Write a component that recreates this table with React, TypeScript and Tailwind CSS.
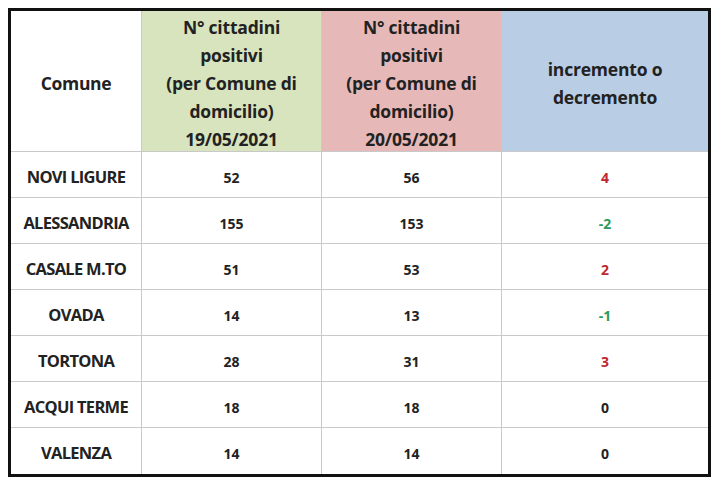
import React from "react";

const rows: [string, string, string, string, "r" | "g" | "k"][] = [
  ["NOVI LIGURE", "52", "56", "4", "r"],
  ["ALESSANDRIA", "155", "153", "-2", "g"],
  ["CASALE M.TO", "51", "53", "2", "r"],
  ["OVADA", "14", "13", "-1", "g"],
  ["TORTONA", "28", "31", "3", "r"],
  ["ACQUI TERME", "18", "18", "0", "k"],
  ["VALENZA", "14", "14", "0", "k"],
];

export default function App() {
  return (
    <div className="w-[720px] h-[485px] bg-white pt-[8px] pl-[8px]" style={{ fontFamily: "'Open Sans', sans-serif" }}>
      <div className="w-[703px] border-[3px] border-[#111] grid grid-cols-[131px_180px_180px_1fr] text-[#222] font-bold">
        <div className="h-[141px] flex items-center justify-center text-[17.5px] tracking-[-0.3px] border-r border-b border-[#c9c9c9] pt-[4px]">Comune</div>
        <div className="h-[141px] flex items-center justify-center text-center text-[17.5px] tracking-[-0.2px] leading-[28px] bg-[#d8e4bd] border-r border-b border-[#c9c9c9] pt-[4px]">
          <div>N° cittadini<br />positivi<br />(per Comune di<br />domicilio)<br />19/05/2021</div>
        </div>
        <div className="h-[141px] flex items-center justify-center text-center text-[17.5px] tracking-[-0.2px] leading-[28px] bg-[#e6b9b8] border-r border-b border-[#c9c9c9] pt-[4px]">
          <div>N° cittadini<br />positivi<br />(per Comune di<br />domicilio)<br />20/05/2021</div>
        </div>
        <div className="h-[141px] flex items-center justify-center text-center text-[17.5px] tracking-[-0.2px] leading-[28px] bg-[#b9cde5] border-b border-[#c9c9c9] pt-[4px]">
          <div>incremento o<br />decremento</div>
        </div>
        {rows.map((r, i) => {
          const last = i === rows.length - 1;
          const bb = last ? "" : "border-b";
          const color = r[4] === "r" ? "text-[#c0272d]" : r[4] === "g" ? "text-[#2e9a5b]" : "text-[#222]";
          return (
            <React.Fragment key={r[0]}>
              <div className={`h-[46px] flex items-center justify-center text-[16.5px] tracking-[-0.7px] border-r border-[#c9c9c9] pt-[5px] ${bb}`}>{r[0]}</div>
              <div className={`h-[46px] flex items-center justify-center text-[14px] border-r border-[#c9c9c9] pt-[5px] ${bb}`}>{r[1]}</div>
              <div className={`h-[46px] flex items-center justify-center text-[14px] border-r border-[#c9c9c9] pt-[5px] ${bb}`}>{r[2]}</div>
              <div className={`h-[46px] flex items-center justify-center text-[14px] border-[#c9c9c9] pt-[5px] ${bb} ${color}`}>{r[3]}</div>
            </React.Fragment>
          );
        })}
      </div>
    </div>
  );
}
